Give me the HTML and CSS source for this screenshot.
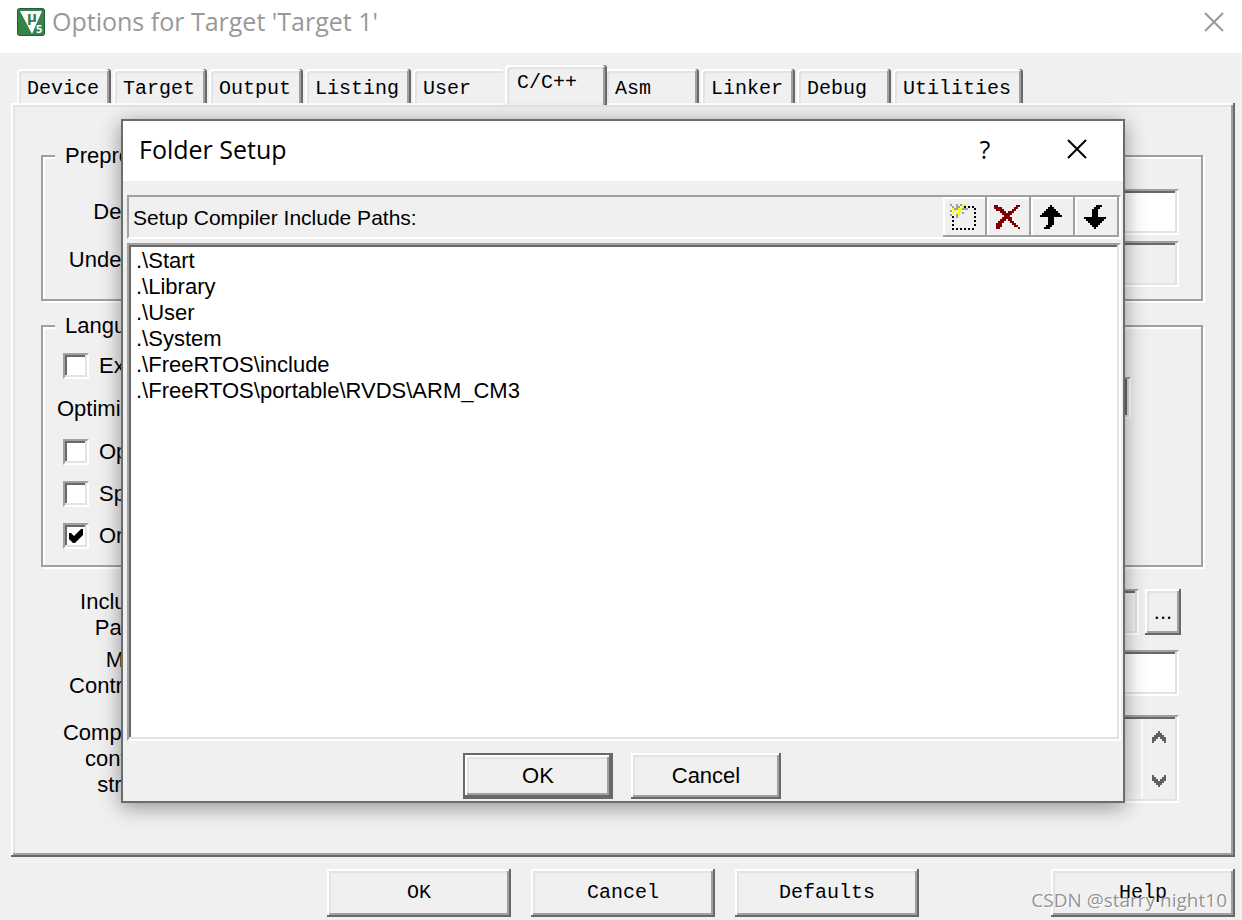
FILE: index.html
```html
<!DOCTYPE html>
<html lang="en">
<head>
    <meta charset="UTF-8">
    <meta name="viewport" content="width=device-width, initial-scale=1.0">
    <title>Options for Target 'Target 1'</title>
    <link rel="stylesheet" href="styles.css">
</head>
<body>
    <div class="window">
        <header class="title-bar">
            <svg class="logo" width="28" height="28" viewBox="0 0 28 28">
                <rect width="28" height="28" rx="3" fill="#1f5f33"/>
                <rect x="1" y="1" width="26" height="26" rx="2" fill="#36834a"/>
                <path d="M3 3H25L15 26Z" fill="#fff"/>
                <text x="10" y="14" font-size="15" font-weight="bold" fill="#2c7a41">µ</text>
                <text x="19" y="25" font-size="11" font-weight="bold" fill="#fff">5</text>
            </svg>
            <h1>Options for Target 'Target 1'</h1>
            <button class="caption-button" aria-label="Close">
                <svg width="20" height="20" viewBox="0 0 20 20"><path d="M1 1L19 19M19 1L1 19"/></svg>
            </button>
        </header>

        <nav class="tabs">
            <button class="tab">Device</button>
            <button class="tab">Target</button>
            <button class="tab">Output</button>
            <button class="tab">Listing</button>
            <button class="tab">User</button>
            <button class="tab active">C/C++</button>
            <button class="tab">Asm</button>
            <button class="tab">Linker</button>
            <button class="tab">Debug</button>
            <button class="tab">Utilities</button>
        </nav>

        <main class="panel raised">
            <fieldset>
                <legend>Preprocessor Symbols</legend>
                <div class="symbols">
                    <div class="symbol-labels">
                        <label for="define">Define:</label>
                        <label for="undefine">Undefine:</label>
                    </div>
                    <div class="symbol-fields">
                        <input class="field sunken" type="text" id="define">
                        <input class="field sunken" type="text" id="undefine" disabled>
                    </div>
                </div>
            </fieldset>

            <fieldset>
                <legend>Language / Code Generation</legend>
                <div class="language">
                    <div class="checks">
                        <label class="check"><input class="sunken" type="checkbox">Execute-only Code</label>
                        <div class="optimization">Optimization:</div>
                        <label class="check"><input class="sunken" type="checkbox">Optimize for Time</label>
                        <label class="check"><input class="sunken" type="checkbox">Split Load and Store Multiple</label>
                        <label class="check"><input class="sunken" type="checkbox" checked>One ELF Section per Function</label>
                    </div>
                    <div class="warnings">
                        <label for="warnings">Warnings:</label>
                        <select class="sunken" id="warnings"><option>All Warnings</option></select>
                    </div>
                </div>
            </fieldset>

            <div class="row include-row">
                <label for="include">Include<br>Paths</label>
                <input class="field sunken" type="text" id="include" readonly>
                <button class="browse raised">...</button>
            </div>
            <div class="row">
                <label for="misc">Misc<br>Controls</label>
                <input class="field sunken" type="text" id="misc">
            </div>
            <div class="row string-row">
                <label for="string">Compiler<br>control<br>string</label>
                <div class="string-box sunken">
                    <textarea id="string" readonly></textarea>
                    <div class="scroll">
                        <button aria-label="Scroll up">
                            <svg width="14" height="12" viewBox="0 0 7 6"><path d="M3 0h1v1h1v1h1v1h1v3h-1v-1h-1v-1h-1v-1h-1v1h-1v1h-1v1h-1v-3h1v-1h1v-1h1z"/></svg>
                        </button>
                        <button aria-label="Scroll down">
                            <svg width="14" height="12" viewBox="0 0 7 6"><path d="M3 6h1v-1h1v-1h1v-1h1v-3h-1v1h-1v1h-1v1h-1v-1h-1v-1h-1v-1h-1v3h1v1h1v1h1z"/></svg>
                        </button>
                    </div>
                </div>
            </div>
        </main>

        <footer class="actions">
            <button class="raised">OK</button>
            <button class="raised">Cancel</button>
            <button class="raised">Defaults</button>
            <button class="raised help">Help</button>
        </footer>

        <section class="dialog" role="dialog" aria-labelledby="dialogTitle">
            <header class="dialog-title">
                <h2 id="dialogTitle">Folder Setup</h2>
                <button class="caption-button" aria-label="Help">?</button>
                <button class="caption-button" aria-label="Close">
                    <svg width="20" height="20" viewBox="0 0 20 20"><path d="M1 1L19 19M19 1L1 19"/></svg>
                </button>
            </header>
            <div class="dialog-body">
                <div class="toolbar">
                    <span>Setup Compiler Include Paths:</span>
                    <button aria-label="New">
                        <svg width="26" height="26" viewBox="0 0 13 13">
                            <path d="M7 1h1v1h-1zM9 1h1v1h-1zM11 1h1v1h-1zM12 2h1v1h-1zM12 4h1v1h-1zM12 6h1v1h-1zM12 8h1v1h-1zM12 10h1v1h-1zM1 6h1v1h-1zM1 8h1v1h-1zM1 10h1v1h-1zM1 12h1v1h-1zM3 12h1v1h-1zM5 12h1v1h-1zM7 12h1v1h-1zM9 12h1v1h-1zM11 12h1v1h-1z"/>
                            <path fill="#a0a0a0" d="M0 0h1v1h-1zM3 0h1v2h-1zM5 0h1v1h-1zM1 1h1v1h-1zM2 2h2v1h-2zM6 2h3v1h-3zM0 3h1v1h-1zM0 5h1v1h-1zM3 5h1v2h-1zM6 4h1v1h-1zM4 1h1v1h-1z"/>
                            <path fill="#ff0" d="M7 0h1v1h-1zM6 1h1v1h-1zM1 2h1v1h-1zM4 2h2v1h-2zM2 3h1v1h-1zM4 3h2v1h-2zM1 4h1v1h-1zM3 4h2v1h-2zM4 5h1v1h-1z"/>
                        </svg>
                    </button>
                    <button aria-label="Delete">
                        <svg width="26" height="24" viewBox="0 0 13 12">
                            <path fill="#fff" d="M12 1h1v1h-1zM11 2h1v1h-1zM10 3h1v1h-1zM9 4h1v1h-1zM8 5h1v1h-1zM9 7h1v1h-1zM10 8h1v1h-1zM11 9h1v1h-1zM12 10h1v1h-1zM5 8h1v1h-1zM4 9h1v1h-1z"/>
                            <path fill="#800000" d="M0 0h2v1h-2zM11 0h2v1h-2zM0 1h4v1h-4zM10 1h2v1h-2zM1 2h4v1h-4zM9 2h2v1h-2zM3 3h3v1h-3zM7 3h3v1h-3zM4 4h5v1h-5zM5 5h3v1h-3zM4 6h5v1h-5zM3 7h3v1h-3zM7 7h2v1h-2zM2 8h3v1h-3zM8 8h2v1h-2zM1 9h3v1h-3zM9 9h2v1h-2zM1 10h3v1h-3zM10 10h2v1h-2zM1 11h2v1h-2zM12 11h1v1h-1z"/>
                        </svg>
                    </button>
                    <button aria-label="Move up">
                        <svg width="22" height="24" viewBox="0 0 11 12"><path d="M5 0h1v1h1v1h1v1h1v1h1v1h1v1h-4v4h-1v1h-1v1h-3v-1h1v-1h1v-4h-4v-1h1v-1h1v-1h1v-1h1v-1h1z"/></svg>
                    </button>
                    <button aria-label="Move down">
                        <svg width="22" height="24" viewBox="0 0 11 12"><path d="M6 0h3v1h-1v1h-1v4h4v1h-1v1h-1v1h-1v1h-1v1h-1v1h-1v-1h-1v-1h-1v-1h-1v-1h-1v-1h-1v-1h4v-4h1v-1h1z"/></svg>
                    </button>
                </div>
                <ul class="paths sunken">
                    <li>.\Start</li>
                    <li>.\Library</li>
                    <li>.\User</li>
                    <li>.\System</li>
                    <li>.\FreeRTOS\include</li>
                    <li>.\FreeRTOS\portable\RVDS\ARM_CM3</li>
                </ul>
                <div class="dialog-actions">
                    <button class="raised default">OK</button>
                    <button class="raised">Cancel</button>
                </div>
            </div>
        </section>

        <div class="watermark">CSDN @starry night10</div>
    </div>
</body>
</html>
```
FILE: styles.css
```css
* {
    box-sizing: border-box;
}
body {
    margin: 0;
    background-color: #f0f0f0;
    color: #000;
    font-family: "Liberation Sans", Arial, sans-serif;
    font-size: 22px;
    line-height: 26px;
}
button, input, select, textarea {
    font: inherit;
    color: inherit;
    margin: 0;
    padding: 0;
    border: none;
    border-radius: 0;
    background: #f0f0f0;
}
h1, h2 {
    margin: 0;
    font-family: "Open Sans", "Noto Sans", sans-serif;
    font-weight: normal;
}
svg {
    display: block;
    flex-shrink: 0;
    shape-rendering: crispEdges;
}
.raised {
    box-shadow: inset -2px -2px #696969, inset 2px 2px #fff, inset -4px -4px #a0a0a0, inset 4px 4px #e3e3e3;
}
.sunken {
    border: 2px solid #fff;
    border-top-color: #a0a0a0;
    border-left-color: #a0a0a0;
    box-shadow: inset -2px -2px #e3e3e3, inset 2px 2px #696969;
}
.window {
    position: relative;
    min-height: 100vh;
}

/* main title bar */
.title-bar {
    display: flex;
    align-items: center;
    height: 53px;
    padding: 0 0 10px 17px;
    background: #fff;
    color: #999;
}
.title-bar h1 {
    flex: 1;
    margin-left: 7px;
    padding-bottom: 2px;
    font-size: 25px;
}
.logo {
    overflow: visible;
    font-family: "Open Sans", sans-serif;
    shape-rendering: auto;
}
.caption-button {
    display: flex;
    align-items: center;
    justify-content: center;
    width: 56px;
    height: 43px;
    background: none;
}
.caption-button svg {
    fill: none;
    stroke: currentColor;
    stroke-width: 2;
    shape-rendering: auto;
}

/* tabs */
.tabs {
    display: flex;
    align-items: flex-end;
    gap: 2px;
    padding: 12px 0 0 17px;
    font-family: "Liberation Mono", monospace;
    font-size: 20px;
}
.tab {
    min-width: 94px;
    height: 34px;
    padding: 6px 12px 0 10px;
    text-align: left;
    border-radius: 3px 3px 0 0;
    box-shadow: inset -2px 0 #696969, inset 2px 2px #fff, inset -4px 0 #a0a0a0, inset 4px 4px #e3e3e3;
}
.tab.active {
    position: relative;
    min-width: 102px;
    height: 40px;
    margin: 0 -4px -2px -4px;
    padding: 0 12px 4px 12px;
    box-shadow: -2px 0 #f0f0f0, inset -2px 0 #696969, inset 2px 2px #fff, inset -4px 0 #a0a0a0, inset 4px 4px #e3e3e3;
}

/* options page */
.panel {
    margin: 0 7px 0 11px;
    padding: 40px 32px 54px 30px;
}
fieldset {
    min-width: 0;
    margin: 0 0 12px 0;
    padding: 0;
    border: 2px solid #a0a0a0;
    box-shadow: 2px 2px #fff, inset 2px 2px #fff;
}
legend {
    margin-left: 12px;
    padding: 0 10px;
    background: #f0f0f0;
}
.symbols {
    display: flex;
    gap: 6px;
    padding: 20px 22px 12px 0;
}
.symbol-labels {
    display: flex;
    flex-direction: column;
    gap: 22px;
    width: 120px;
    padding-top: 10px;
    text-align: right;
}
.symbol-fields {
    display: flex;
    flex: 1;
    flex-direction: column;
    gap: 6px;
}
.field {
    flex: 1;
    min-width: 0;
    height: 46px;
    min-height: 46px;
    background: #fff;
}
.field:disabled, .field:read-only {
    background: #f0f0f0;
}
.language {
    display: flex;
    justify-content: space-between;
    padding: 14px 70px 16px 14px;
}
.checks {
    display: flex;
    flex-direction: column;
    gap: 16px;
}
.optimization {
    line-height: 28px;
}
.check {
    display: flex;
    align-items: center;
    gap: 10px;
    margin-left: 6px;
}
.check input {
    appearance: none;
    width: 26px;
    height: 26px;
    padding: 4px;
    background: #fff;
}
.check input:checked::before {
    content: "";
    display: block;
    width: 14px;
    height: 14px;
    background: #000;
    clip-path: polygon(0 4px, 2px 4px, 5px 7px, 12px 0, 14px 0, 14px 6px, 6px 14px, 4px 14px, 0 10px);
}
.warnings {
    display: flex;
    align-items: center;
    align-self: flex-start;
    gap: 8px;
    padding-top: 24px;
}
.warnings select {
    appearance: none;
    width: 240px;
    height: 42px;
    background: #696969;
}
.row {
    display: flex;
    align-items: center;
    gap: 8px;
    padding-right: 24px;
    margin-bottom: 6px;
}
.row label {
    width: 110px;
    text-align: right;
}
.include-row {
    align-items: flex-start;
    gap: 6px;
    padding-right: 22px;
    margin-top: 22px;
}
.browse {
    width: 36px;
    height: 46px;
}
.string-row {
    margin: 16px 0 0 0;
}
.string-box {
    display: flex;
    flex: 1;
    height: 88px;
    padding: 2px;
}
.string-box textarea {
    flex: 1;
    resize: none;
}
.scroll {
    display: flex;
    flex-direction: column;
    justify-content: space-between;
    width: 34px;
    border-left: 2px solid #fff;
}
.scroll button {
    display: flex;
    align-items: center;
    justify-content: center;
    height: 36px;
    fill: #606060;
}

/* bottom buttons */
.actions {
    display: flex;
    gap: 20px;
    padding: 12px 7px 3px 327px;
    font-family: "Liberation Mono", monospace;
    font-size: 20px;
}
.actions button {
    width: 184px;
    height: 48px;
}
.actions .help {
    margin-left: auto;
}

/* folder setup dialog */
.dialog {
    position: absolute;
    top: 119px;
    left: 121px;
    right: 117px;
    background: #f0f0f0;
    border: 2px solid #696d6d;
    box-shadow: 0 4px 20px rgba(0, 0, 0, 0.4);
}
.dialog-title {
    display: flex;
    align-items: center;
    height: 60px;
    padding: 0 0 4px 16px;
    background: #fff;
}
.dialog-title h2 {
    flex: 1;
    font-size: 25px;
}
.dialog-title .caption-button {
    width: 92px;
    height: 56px;
    font-family: "Open Sans", "Noto Sans", sans-serif;
    font-size: 25px;
}
.dialog-body {
    padding: 14px 2px 2px 4px;
}
.toolbar {
    display: flex;
    align-items: center;
    margin-bottom: 4px;
    border: 2px solid #fff;
    border-top-color: #a0a0a0;
    border-left-color: #a0a0a0;
}
.toolbar span {
    flex: 1;
    padding: 2px 0 0 4px;
    font-size: 21px;
}
.toolbar button {
    display: flex;
    align-items: center;
    justify-content: center;
    width: 44px;
    height: 40px;
    padding-right: 4px;
    box-shadow: inset -2px -2px #a0a0a0, inset 2px 2px #fff;
}
.paths {
    height: 498px;
    margin: 0;
    padding: 3px 7px;
    background: #fff;
    list-style: none;
}
.dialog-actions {
    display: flex;
    justify-content: center;
    gap: 18px;
    margin-top: 12px;
    padding-right: 4px;
}
.dialog-actions button {
    width: 150px;
    height: 46px;
}
.dialog-actions .default {
    border: 2px solid #696969;
}

.watermark {
    position: absolute;
    right: 15px;
    bottom: 7px;
    font-family: "Open Sans", "Noto Sans", sans-serif;
    font-size: 19px;
    color: rgba(120, 120, 120, 0.8);
    text-shadow: 1px 1px #fff;
}
```
